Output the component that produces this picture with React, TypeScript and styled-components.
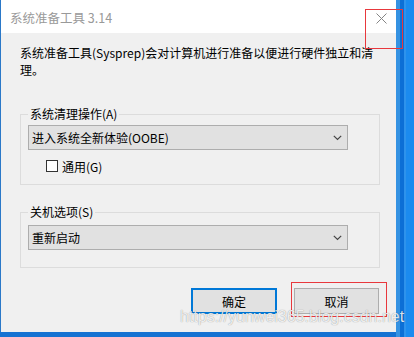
import React from "react";
import styled, { createGlobalStyle } from "styled-components";

const GlobalStyle = createGlobalStyle`
  html, body {
    margin: 0;
    padding: 0;
  }
  body {
    font-family: "Noto Sans CJK SC", "Noto Sans", sans-serif;
    color: #000;
  }
`;

const Desktop = styled.div`
  position: relative;
  width: 414px;
  height: 337px;
  overflow: hidden;
  background:
    linear-gradient(
      90deg,
      #1572d2 0,
      #1572d2 396px,
      #3592e2 396px,
      #3592e2 400px,
      #0c6fd6 400px,
      #0c6fd6 404px,
      #2e93ec 404px,
      #2e93ec 406px,
      #1b8bef 406px
    );
`;

const Window = styled.div`
  margin-left: 1px;
  width: 395px;
  height: 332px;
  background: #f0f0f0;
  display: flex;
  flex-direction: column;
  box-shadow: -1px 0 0 #2a78c8;
`;

const TitleBar = styled.div`
  height: 33px;
  flex: none;
  background: #fff;
  display: flex;
  align-items: center;
  justify-content: space-between;
  padding-left: 9px;
`;

const Title = styled.span`
  font-size: 12.5px;
  color: #999;
  line-height: 16px;
  margin-top: 3px;
`;

const CloseButton = styled.div`
  width: 30px;
  height: 33px;
  display: flex;
  align-items: center;
  justify-content: center;
  margin-top: 3px;
`;

const Body = styled.div`
  padding: 11px 0 0 19px;
  display: flex;
  flex-direction: column;
`;

const Description = styled.p`
  margin: 0;
  font-size: 12px;
  line-height: 17px;
  white-space: nowrap;
`;

const GroupBox = styled.fieldset<{ $top: number; $pt: number; $pb: number }>`
  margin: ${(p) => p.$top}px 0 0 0;
  width: 360px;
  box-sizing: border-box;
  min-width: 0;
  border: 1px solid #dcdcdc;
  padding: ${(p) => p.$pt}px 7px ${(p) => p.$pb}px 7px;
`;

const Legend = styled.legend`
  padding: 0 2px;
  font-size: 12px;
  line-height: 16px;
`;

const Combo = styled.div`
  width: 320px;
  height: 25px;
  box-sizing: border-box;
  background: #e1e1e1;
  border: 1px solid #adadad;
  display: flex;
  align-items: center;
  justify-content: space-between;
  padding: 0 5px 0 3px;
  font-size: 12px;
`;

const CheckRow = styled.div`
  margin: 10px 0 0 18px;
  height: 12px;
  display: flex;
  align-items: center;
  gap: 4px;
  font-size: 12px;
`;

const CheckBox = styled.span`
  width: 12px;
  height: 12px;
  box-sizing: border-box;
  border: 1px solid #333;
  background: #fff;
`;

const ButtonRow = styled.div`
  width: 360px;
  margin-top: 20px;
  padding-right: 1px;
  box-sizing: border-box;
  display: flex;
  justify-content: flex-end;
  gap: 17px;
`;

const Button = styled.div<{ $default?: boolean; $w: number }>`
  width: ${(p) => p.$w}px;
  height: 26px;
  box-sizing: border-box;
  background: #e1e1e1;
  border: ${(p) => (p.$default ? "2px solid #0078d7" : "1px solid #adadad")};
  display: flex;
  align-items: center;
  justify-content: center;
  font-size: 12px;
`;

const Annotation = styled.div<{ $x: number; $y: number; $w: number; $h: number }>`
  position: absolute;
  left: ${(p) => p.$x}px;
  top: ${(p) => p.$y}px;
  width: ${(p) => p.$w}px;
  height: ${(p) => p.$h}px;
  box-sizing: border-box;
  border: 1px solid #e8383d;
  pointer-events: none;
`;

const Watermark = styled.div`
  position: absolute;
  left: 180px;
  top: 308px;
  font-family: "Liberation Sans", Arial, sans-serif;
  font-size: 16px;
  line-height: 18px;
  color: rgba(255, 255, 255, 0.85);
  text-shadow: 0 0 1px rgba(0, 0, 0, 0.45);
  white-space: nowrap;
  pointer-events: none;
`;

function Chevron() {
  return (
    <svg width="9" height="6" viewBox="0 0 9 6">
      <path d="M0.8 0.8 L4.5 4.5 L8.2 0.8" fill="none" stroke="#444" strokeWidth="1.2" />
    </svg>
  );
}

function CloseIcon() {
  return (
    <svg width="11" height="11" viewBox="0 0 11 11">
      <path d="M0.5 0.5 L10.5 10.5 M10.5 0.5 L0.5 10.5" stroke="#858585" strokeWidth="1" />
    </svg>
  );
}

export default function App() {
  return (
    <Desktop>
      <GlobalStyle />
      <Window>
        <TitleBar>
          <Title>系统准备工具 3.14</Title>
          <CloseButton>
            <CloseIcon />
          </CloseButton>
        </TitleBar>

        <Body>
          <Description>
            系统准备工具(Sysprep)会对计算机进行准备以便进行硬件独立和清
            <br />
            理。
          </Description>

          {/* cleanup action */}
          <GroupBox $top={28} $pt={3} $pb={12}>
            <Legend>系统清理操作(A)</Legend>
            <Combo>
              <span>进入系统全新体验(OOBE)</span>
              <Chevron />
            </Combo>
            <CheckRow>
              <CheckBox />
              <span>通用(G)</span>
            </CheckRow>
          </GroupBox>

          {/* shutdown options */}
          <GroupBox $top={19} $pt={5} $pb={17}>
            <Legend>关机选项(S)</Legend>
            <Combo>
              <span>重新启动</span>
              <Chevron />
            </Combo>
          </GroupBox>

          <ButtonRow>
            <Button $default $w={86}>确定</Button>
            <Button $w={85}>取消</Button>
          </ButtonRow>
        </Body>
      </Window>

      <Annotation $x={365} $y={9} $w={38} $h={40} />
      <Annotation $x={291} $y={282} $w={96} $h={35} />
      <Watermark>https://yunwei365.blog.csdn.net</Watermark>
    </Desktop>
  );
}
